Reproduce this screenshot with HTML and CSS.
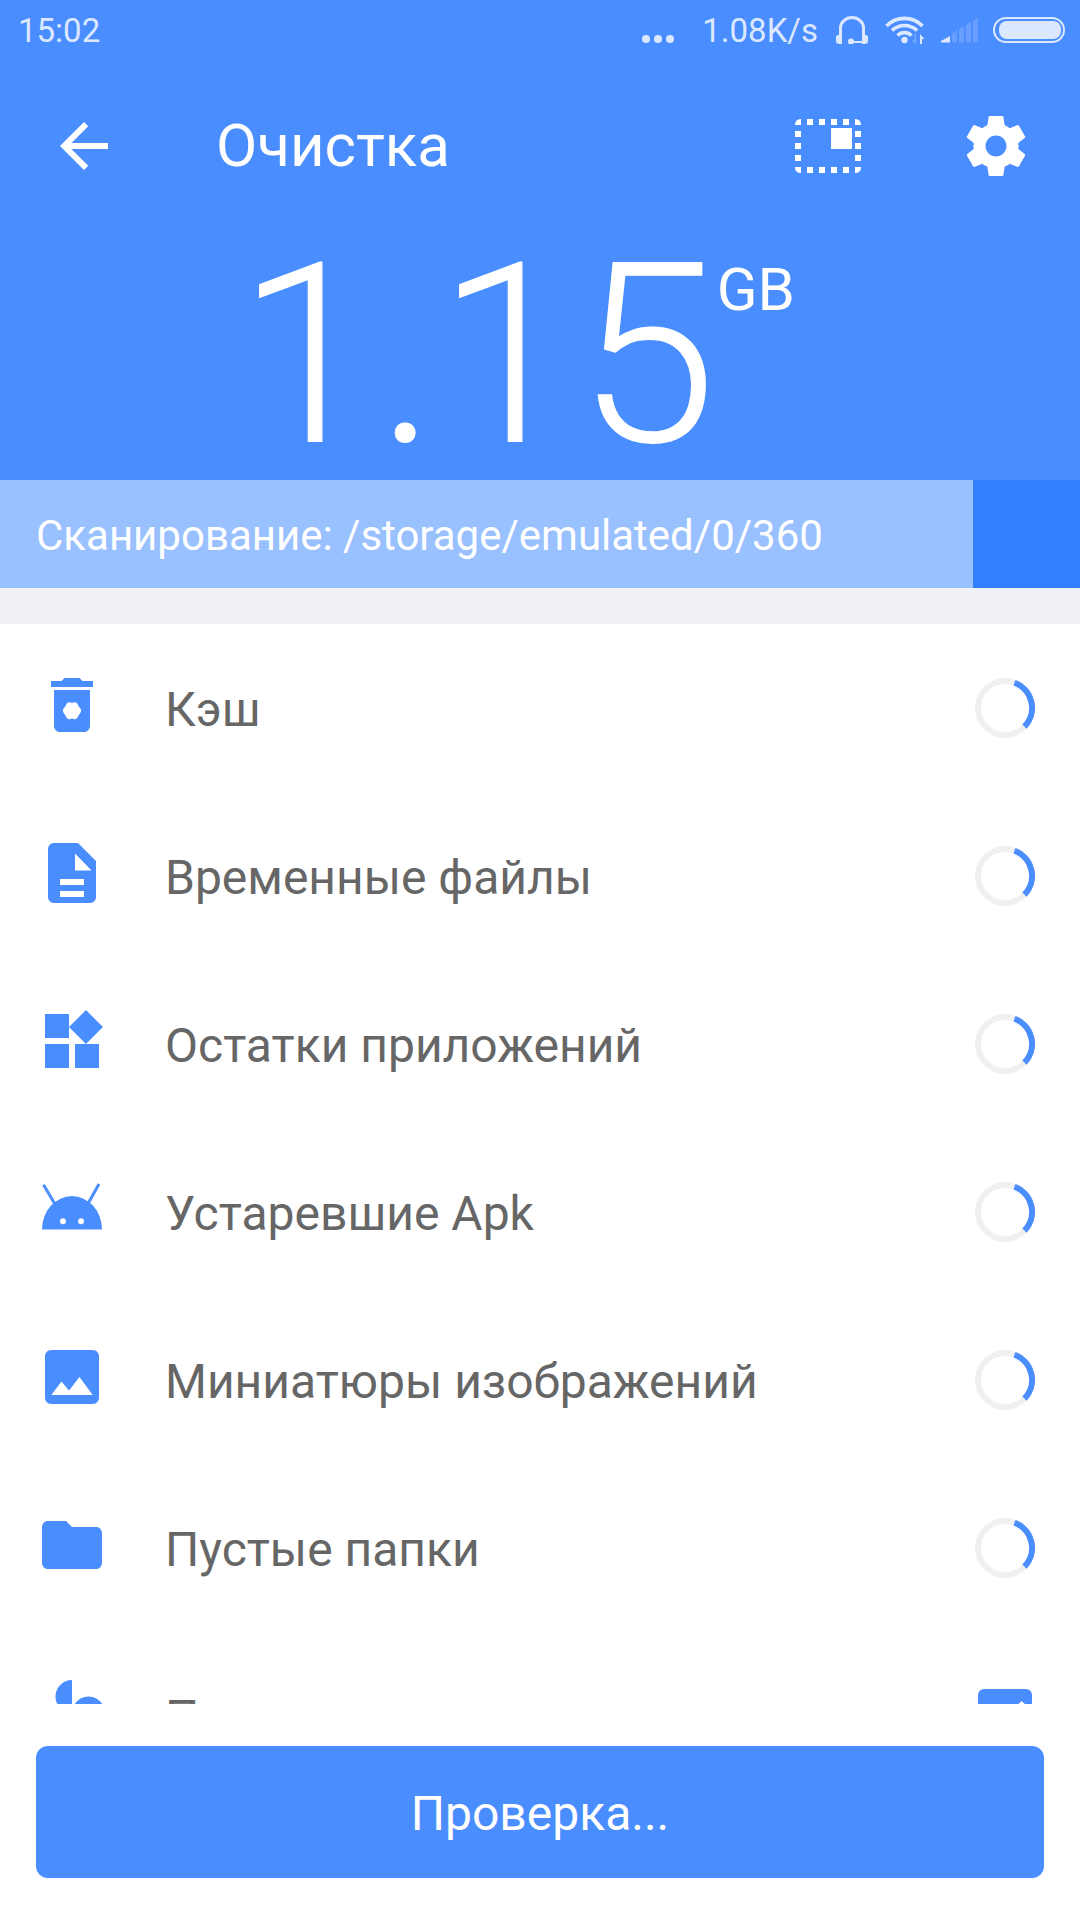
FILE: index.html
```html
<!DOCTYPE html>
<html lang="ru">
<head>
<meta charset="utf-8">
<meta name="viewport" content="width=device-width, initial-scale=1">
<title>Очистка</title>
<link rel="stylesheet" href="styles.css">
</head>
<body>
<svg class="defs" aria-hidden="true">
  <symbol id="spinner" viewBox="0 0 60 60">
    <circle cx="30" cy="30" r="27" fill="none" stroke="#f0f0f0" stroke-width="6"/>
    <path d="M39.500 4.700A27 27 0 0 1 49.500 48.700" fill="none" stroke="#4a8dff" stroke-width="6"/>
  </symbol>
</svg>
<div class="app">
  <header class="top">
    <div class="status">
      <span class="status-text">15:02</span>
      <div class="status-right">
        <svg class="dots" viewBox="0 0 32 28"><circle cx="4" cy="23" r="4"/><circle cx="16" cy="23" r="4"/><circle cx="28" cy="23" r="4"/></svg>
        <span class="status-text">1.08K/s</span>
        <svg class="headset" viewBox="0 0 32 28"><path d="M4.500 20V12a11.500 10.500 0 0 1 23 0v8" fill="none" stroke="currentColor" stroke-width="3"/><path d="M2 19h4v9H3.500Q0 28 0 25v-4q0-2 2-2zM30 19h-4v9h2.500q3.500 0 3.500-3v-4q0-2-2-2z"/><path d="M15 25h12v2H15z"/><circle cx="15" cy="25.500" r="3"/></svg>
        <svg class="wifi" viewBox="0 0 40 28"><g fill="none" stroke="currentColor" stroke-width="3.600"><path d="M1.500 10a25 25 0 0 1 36 0"/><path d="M7 14.500a18 18 0 0 1 25 0"/><path d="M12.500 19.500a10 10 0 0 1 14 0"/></g><circle cx="19.500" cy="24" r="3.200"/><path d="M31 18v10l-4-4h2.500v-6z" opacity=".3"/><path d="M35 28V18l4.500 5H37v5z"/></svg>
        <svg class="signal" viewBox="0 0 38 26"><path d="M0 25.500V24l9-5v6.500z"/><path d="M11 25.500v-9l5-3v12zM18 25.500V12l5-3v16.500zM25 25.500V8l5-3v20.500zM32 25.500V4l5-3.500v25z" opacity=".2"/></svg>
        <svg class="battery" viewBox="0 0 72 26"><rect x="1" y="1" width="70" height="24" rx="12" fill="none" stroke="currentColor" stroke-width="2"/><rect x="6" y="4" width="62" height="18" rx="8"/></svg>
      </div>
    </div>
    <div class="toolbar">
      <button class="icon-btn" aria-label="Назад"><svg viewBox="0 0 24 24"><path d="M20 11H7.830l5.590-5.590L12 4l-8 8 8 8 1.410-1.410L7.830 13H20v-2z"/></svg></button>
      <h1 class="title">Очистка</h1>
      <button class="icon-btn" aria-label="Виджет"><svg viewBox="0 0 24 24"><path d="M13 6h7v7h-7zM5 3h2v2H5zM9 3h2v2H9zM13 3h2v2h-2zM17 3h2v2h-2zM1 7h2v2H1zM1 11h2v2H1zM1 15h2v2H1zM21 7h2v2h-2zM21 11h2v2h-2zM21 15h2v2h-2zM5 19h2v2H5zM9 19h2v2H9zM13 19h2v2h-2zM17 19h2v2h-2zM1 5q0-2 2-2v2zM21 3q2 0 2 2h-2zM1 19h2v2q-2 0-2-2zM21 19h2q0 2-2 2z"/></svg></button>
      <button class="icon-btn" aria-label="Настройки"><svg viewBox="0 0 24 24"><path d="M19.430 12.980c.04-.32.07-.64.07-.98s-.03-.66-.07-.98l2.110-1.650c.19-.15.24-.42.12-.64l-2-3.460c-.12-.22-.39-.3-.61-.22l-2.490 1c-.52-.4-1.080-.73-1.690-.98l-.38-2.650C14.460 2.180 14.250 2 14 2h-4c-.25 0-.46.18-.49.42l-.38 2.650c-.61.25-1.170.59-1.690.98l-2.490-1c-.23-.09-.49 0-.61.22l-2 3.460c-.13.22-.07.49.12.64l2.110 1.650c-.04.32-.07.65-.07.98s.03.66.07.98l-2.110 1.650c-.19.15-.24.42-.12.64l2 3.460c.12.22.39.3.61.22l2.490-1c.52.4 1.080.73 1.690.98l.38 2.650c.03.24.24.42.49.42h4c.25 0 .46-.18.49-.42l.38-2.650c.61-.25 1.170-.59 1.690-.98l2.490 1c.23.09.49 0 .61-.22l2-3.460c.12-.22.07-.49-.12-.64l-2.110-1.650zM12 15.500c-1.930 0-3.500-1.570-3.500-3.500s1.570-3.500 3.500-3.500 3.500 1.570 3.500 3.500-1.570 3.500-3.500 3.500z"/></svg></button>
    </div>
    <div class="total"><span class="total-value">1.15</span><span class="total-unit">GB</span></div>
  </header>
  <div class="progress" role="progressbar" aria-valuenow="90" aria-label="Сканирование">
    <div class="progress-fill" style="width: 90.1%"><span class="progress-text">Сканирование: /storage/emulated/0/360</span></div>
  </div>
  <ul class="list">
    <li class="row">
      <svg class="row-icon" viewBox="0 0 24 24"><path fill-rule="evenodd" d="M6 19c0 1.100.9 2 2 2h8c1.100 0 2-.9 2-2V7H6v12zM19 4h-3.500l-1-1h-5l-1 1H5v2h14V4zM12 11.300Q13.600 10.500 14.200 12.400 15.800 13.900 14.200 15.400 13.600 17.300 12 16.500 10.400 17.300 9.800 15.400 8.200 13.900 9.800 12.400 10.400 10.500 12 11.300z"/></svg>
      <span class="row-label">Кэш</span>
      <svg class="spinner" role="img" aria-label="Сканируется"><use href="#spinner"/></svg>
    </li>
    <li class="row">
      <svg class="row-icon" viewBox="0 0 24 24"><path fill-rule="evenodd" d="M6 2C4.900 2 4 2.900 4 4v16c0 1.100.9 2 2 2h12c1.100 0 2-.9 2-2V8l-6-6H6zM13 5.500L18.500 11.200H13zM8 14h8v2H8zM8 18h8v2H8z"/></svg>
      <span class="row-label">Временные файлы</span>
      <svg class="spinner" role="img" aria-label="Сканируется"><use href="#spinner"/></svg>
    </li>
    <li class="row">
      <svg class="row-icon" viewBox="0 0 24 24"><path d="M13 13v8h8v-8h-8zM3 21h8v-8H3v8zM3 3v8h8V3H3zM16.660 1.690L11 7.340 16.660 13l5.660-5.660-5.660-5.650z"/></svg>
      <span class="row-label">Остатки приложений</span>
      <svg class="spinner" role="img" aria-label="Сканируется"><use href="#spinner"/></svg>
    </li>
    <li class="row">
      <svg class="row-icon" viewBox="0 0 24 24"><path fill-rule="evenodd" d="M2 18.800a10 11.100 0 0 1 20 0zM9 15.100a1 1 0 1 0 0 2 1 1 0 0 0 0-2zM15 15.100a1 1 0 1 0 0 2 1 1 0 0 0 0-2z"/><path d="M2.500 3.900L6.200 10.200M21 3.700L17.500 9.900" fill="none" stroke="currentColor"/></svg>
      <span class="row-label">Устаревшие Apk</span>
      <svg class="spinner" role="img" aria-label="Сканируется"><use href="#spinner"/></svg>
    </li>
    <li class="row">
      <svg class="row-icon" viewBox="0 0 24 24"><path fill-rule="evenodd" d="M5 3h14a2 2 0 0 1 2 2v14a2 2 0 0 1-2 2H5a2 2 0 0 1-2-2V5a2 2 0 0 1 2-2zM5.100 18h13.800L14.500 12 11 16.500 8.500 13.500z"/></svg>
      <span class="row-label">Миниатюры изображений</span>
      <svg class="spinner" role="img" aria-label="Сканируется"><use href="#spinner"/></svg>
    </li>
    <li class="row">
      <svg class="row-icon" viewBox="0 0 24 24"><path d="M10 4H4c-1.100 0-2 .9-2 2v12c0 1.100.9 2 2 2h16c1.100 0 2-.9 2-2V8c0-1.100-.9-2-2-2h-8l-2-2z"/></svg>
      <span class="row-label">Пустые папки</span>
      <svg class="spinner" role="img" aria-label="Сканируется"><use href="#spinner"/></svg>
    </li>
    <li class="row">
      <svg class="row-icon" viewBox="0 0 24 24"><path d="M12 12c0-3 2.500-5.500 5.500-5.500S23 9 23 12H12zm0 0c0 3-2.500 5.500-5.500 5.500S1 15 1 12h11zm0 0c-3 0-5.500-2.500-5.500-5.500S9 1 12 1v11zm0 0c3 0 5.500 2.500 5.500 5.500S15 23 12 23V12z"/></svg>
      <label class="row-label" for="memory">Память</label>
      <input class="check" type="checkbox" id="memory" checked>
    </li>
  </ul>
  <footer class="footer"><button class="action">Проверка...</button></footer>
</div>
</body>
</html>
```
FILE: styles.css
```css
* { box-sizing: border-box; }

body {
  margin: 0;
  background: #fff;
  color: #666;
  font-family: Roboto, "Liberation Sans", sans-serif;
}

button {
  padding: 0;
  border: 0;
  background: none;
  color: inherit;
  font: inherit;
}

svg { display: block; flex: none; fill: currentColor; }

.defs { position: absolute; width: 0; height: 0; }

.app {
  display: flex;
  flex-direction: column;
  height: 100vh;
}

.top { background: #4a8dff; color: #fff; }

.status {
  display: flex;
  justify-content: space-between;
  align-items: center;
  height: 60px;
  padding: 0 15px 0 18px;
  color: #dbe8ff;
}

.status-text { font-size: 33px; line-height: 36px; padding-top: 2px; }

.status-right { display: flex; align-items: center; }

.dots { width: 32px; height: 28px; margin-right: 28px; }
.headset { width: 32px; height: 28px; margin: 0 17px 0 18px; }
.wifi { width: 40px; height: 28px; margin-right: 16px; }
.signal { width: 38px; height: 26px; margin-right: 14px; }
.battery { width: 72px; height: 26px; }

.toolbar {
  display: flex;
  align-items: center;
  height: 172px;
  padding: 0 48px;
}

.icon-btn { width: 72px; height: 72px; margin-left: 96px; }
.icon-btn:first-child { margin-left: 0; }

.title {
  flex: 1;
  margin: 0 0 0 96px;
  font-size: 60px;
  font-weight: 400;
  line-height: 72px;
}

.total {
  display: flex;
  justify-content: center;
  height: 248px;
  padding-right: 48px;
}

.total-value { font-size: 252px; font-weight: 300; line-height: 248px; }
.total-unit { margin-top: 22px; font-size: 60px; line-height: 72px; }

.progress { background: #3380ff; border-bottom: 36px solid #f0f1f7; }

.progress-fill {
  display: flex;
  align-items: center;
  height: 108px;
  padding: 3px 36px 0;
  background: #99c0ff;
  color: #fff;
}

.progress-text { font-size: 42px; line-height: 48px; white-space: nowrap; }

.list {
  flex: 1;
  min-height: 0;
  margin: 0;
  padding: 0;
  overflow: hidden;
  list-style: none;
}

.row {
  display: flex;
  align-items: center;
  height: 168px;
  padding: 0 45px 0 36px;
}

.row-icon { width: 72px; height: 72px; margin-bottom: 6px; color: #4a8dff; }

.row-label {
  flex: 1;
  padding: 3px 0 0 57px;
  font-size: 48px;
  line-height: 56px;
}

.spinner { width: 60px; height: 60px; }

.check {
  width: 54px;
  height: 54px;
  margin: 0 3px;
  appearance: none;
  border-radius: 6px;
  background: #4a8dff;
}

.check:checked::before {
  content: "";
  display: block;
  height: 100%;
  background: #fff;
  clip-path: polygon(39% 78%, 11% 50%, 19% 42%, 39% 62%, 81% 22%, 89% 30%);
}

.footer { padding: 42px 36px; }

.action {
  display: block;
  width: 100%;
  height: 132px;
  padding-top: 3px;
  border-radius: 12px;
  background: #4a8dff;
  color: #fff;
  font-size: 48px;
  line-height: 56px;
}
```
